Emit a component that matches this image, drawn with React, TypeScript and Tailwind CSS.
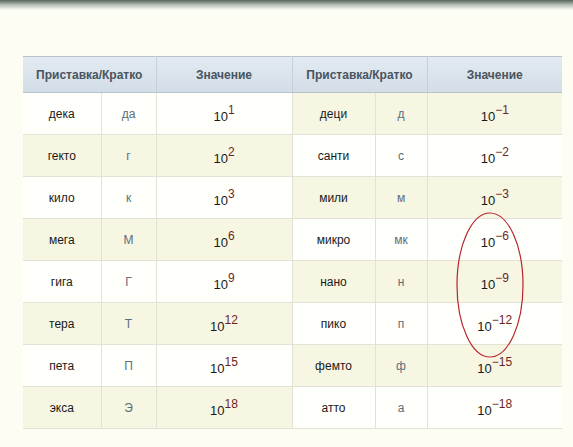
const rows = [
  ["дека", "да", "1", "деци", "д", "−1"],
  ["гекто", "г", "2", "санти", "с", "−2"],
  ["кило", "к", "3", "мили", "м", "−3"],
  ["мега", "М", "6", "микро", "мк", "−6"],
  ["гига", "Г", "9", "нано", "н", "−9"],
  ["тера", "Т", "12", "пико", "п", "−12"],
  ["пета", "П", "15", "фемто", "ф", "−15"],
  ["экса", "Э", "18", "атто", "а", "−18"],
];

function Power({ exp }: { exp: string }) {
  return (
    <span className="inline-block pt-[6px] text-[13px] text-[#1a1a1a]">
      10
      <sup className="relative -top-[7px] text-[12px] text-[#6e1f1f]">{exp}</sup>
    </span>
  );
}

export default function App() {
  const cream = "bg-[#f6f6e2]";
  const white = "bg-[#fffffb]";
  return (
    <div className="relative w-[573px] h-[447px] overflow-hidden bg-[#fdfdf4] font-['Liberation_Sans',Arial,sans-serif]">
      <div className="h-[10px] bg-gradient-to-b from-[#56665c] via-[#b9c2bb] to-[#fdfdf4]" />
      <div className="pl-[23px] pt-[46px]">
        <table className="border-collapse table-fixed w-[539px] text-center text-[12px]">
          <colgroup>
            <col className="w-[78px]" />
            <col className="w-[55px]" />
            <col className="w-[136px]" />
            <col className="w-[83px]" />
            <col className="w-[52px]" />
            <col className="w-[135px]" />
          </colgroup>
          <thead>
            <tr className="h-[36px] bg-gradient-to-b from-[#e3eaf1] to-[#d2dde7] text-[#49545e] font-bold">
              <th colSpan={2} className="border-t border-b border-[#b7c3cc] border-r border-r-[#c6d0d8] font-bold">Приставка/Кратко</th>
              <th className="border-t border-b border-[#b7c3cc] border-r border-r-[#c6d0d8] font-bold">Значение</th>
              <th colSpan={2} className="border-t border-b border-[#b7c3cc] border-r border-r-[#c6d0d8] font-bold">Приставка/Кратко</th>
              <th className="border-t border-b border-[#b7c3cc] font-bold">Значение</th>
            </tr>
          </thead>
          <tbody>
            {rows.map((r, i) => {
              const left = i % 2 === 0 ? white : cream;
              const right = i % 2 === 0 ? cream : white;
              return (
                <tr key={i} className="h-[42px]">
                  <td className={`${left} border-b border-r border-[#e2e2d6] text-[#1a1a1a]`}>{r[0]}</td>
                  <td className={`${left} border-b border-r border-[#e2e2d6] text-[#5b6e7c]`}>{r[1]}</td>
                  <td className={`${left} border-b border-r border-[#e2e2d6]`}><Power exp={r[2]} /></td>
                  <td className={`${right} border-b border-r border-[#e2e2d6] text-[#1a1a1a]`}>{r[3]}</td>
                  <td className={`${right} border-b border-r border-[#e2e2d6] text-[#5b6e7c]`}>{r[4]}</td>
                  <td className={`${right} border-b border-[#e2e2d6]`}><Power exp={r[5]} /></td>
                </tr>
              );
            })}
          </tbody>
        </table>
      </div>
      <svg className="absolute left-0 top-0 pointer-events-none" width="573" height="447">
        <ellipse cx="490" cy="285" rx="33" ry="72" fill="none" stroke="#b8252d" strokeWidth="1.2" />
      </svg>
    </div>
  );
}
